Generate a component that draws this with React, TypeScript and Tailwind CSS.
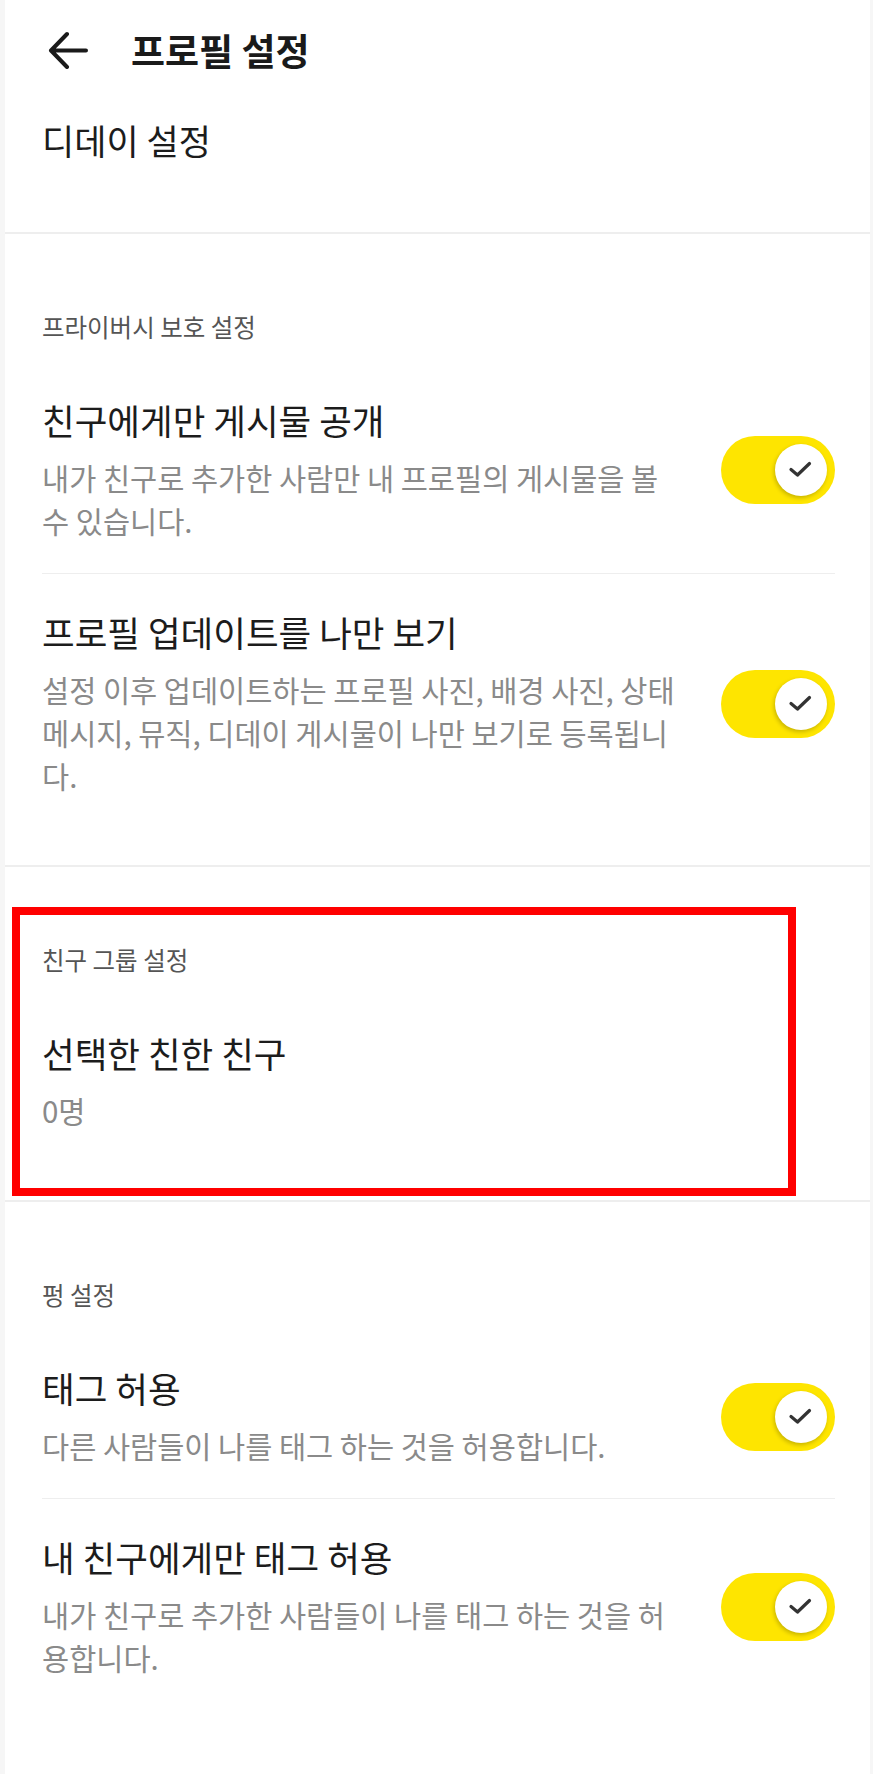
import React from "react";

function Toggle() {
  return (
    <div className="relative w-[114px] h-[68px] rounded-full bg-[#fee500] shrink-0">
      <div className="absolute right-[8px] top-1/2 -translate-y-1/2 w-[52px] h-[52px] rounded-full bg-white shadow-[-1px_2px_4px_rgba(0,0,0,0.22)] flex items-center justify-center">
        <svg width="52" height="52" viewBox="0 0 52 52" fill="none">
          <path d="M16 25.5 L22.5 31 L34.5 19.5" stroke="#333333" strokeWidth="3.2" strokeLinecap="round" strokeLinejoin="round" />
        </svg>
      </div>
    </div>
  );
}

type ItemProps = { title: string; desc: string; toggle?: boolean; last?: boolean };

function Item({ title, desc, toggle = true, last = false }: ItemProps) {
  return (
    <div className={"flex items-center gap-[34px] pt-[36px] pb-[31px] " + (last ? "" : "border-b border-[#eeeeee]")}>
      <div className="flex-1 min-w-0">
        <div className="text-[35.5px] leading-[44px] text-[#1c1c1c]">{title}</div>
        <div className="mt-[14px] text-[29.5px] leading-[43px] text-[#8a8a8a]">{desc}</div>
      </div>
      {toggle ? <Toggle /> : null}
    </div>
  );
}

function Section({ header, children }: { header: string; children: React.ReactNode }) {
  return (
    <div className="pt-[78px] pb-[37px] pl-[37px] pr-[35px]">
      <div className="text-[24.5px] leading-[30px] text-[#555555] mb-[20px]">{header}</div>
      {children}
    </div>
  );
}

function Divider() {
  return <div className="h-[2px] bg-[#eeeeee]" />;
}

export default function App() {
  return (
    <div className="w-full min-h-[1774px] bg-[#f6f6f6] pl-[5px] pr-[3px] font-['Noto_Sans_CJK_KR','Noto_Sans',sans-serif]">
      <div className="relative bg-white min-h-[1774px]">
        <div className="h-[100px] flex items-center pl-[43px]">
          <svg width="40" height="38" viewBox="0 0 40 38" fill="none">
            <path d="M38 19.5 H4 M19 3 L3 19.5 L19 36" stroke="#1a1a1a" strokeWidth="4" strokeLinecap="round" strokeLinejoin="round" />
          </svg>
          <div className="ml-[43px] text-[37px] leading-[44px] font-bold text-[#1a1a1a]">프로필 설정</div>
        </div>
        <div className="h-[132px] pt-[19px] px-[37px]">
          <div className="text-[35px] leading-[42px] text-[#1c1c1c]">디데이 설정</div>
        </div>
        <Divider />

        <Section header="프라이버시 보호 설정">
          <Item title="친구에게만 게시물 공개" desc="내가 친구로 추가한 사람만 내 프로필의 게시물을 볼 수 있습니다." />
          <Item
            title="프로필 업데이트를 나만 보기"
            desc="설정 이후 업데이트하는 프로필 사진, 배경 사진, 상태 메시지, 뮤직, 디데이 게시물이 나만 보기로 등록됩니다."
            last
          />
        </Section>
        <Divider />

        <Section header="친구 그룹 설정">
          <Item title="선택한 친한 친구" desc="0명" toggle={false} last />
        </Section>
        <Divider />

        <Section header="펑 설정">
          <Item title="태그 허용" desc="다른 사람들이 나를 태그 하는 것을 허용합니다." />
          <Item title="내 친구에게만 태그 허용" desc="내가 친구로 추가한 사람들이 나를 태그 하는 것을 허용합니다." last />
        </Section>

        <div className="absolute left-[7px] top-[907px] w-[784px] h-[289px] border-[8px] border-[#ff0000] pointer-events-none" />
      </div>
    </div>
  );
}
